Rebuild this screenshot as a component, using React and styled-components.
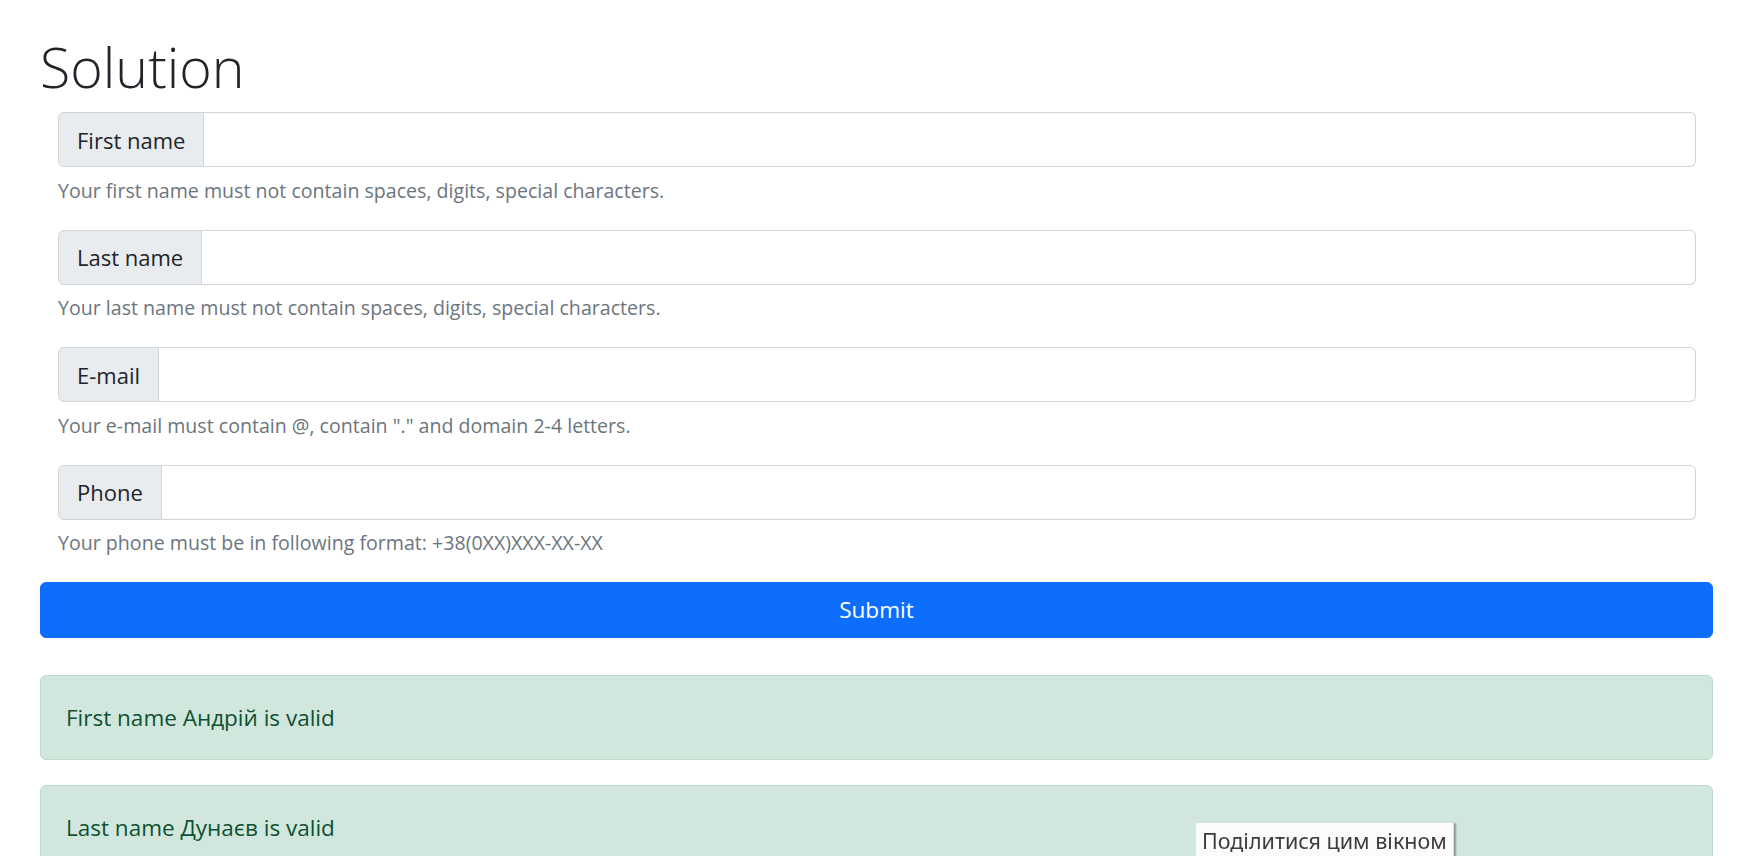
import styled, { createGlobalStyle } from 'styled-components';

const GlobalStyle = createGlobalStyle`
  html {
    overflow: hidden;
  }
  body {
    margin: 0;
    background: #fff;
    color: #212529;
    font-family: "Open Sans", "Noto Sans", sans-serif;
  }
`;

const Page = styled.div`
  padding: 34px 37px 0 40px;
`;

const Title = styled.h1`
  margin: 0 0 11.5px;
  font-size: 55.5px;
  font-weight: 300;
  line-height: 1.2;
  color: #212529;
`;

const Form = styled.form`
  display: flex;
  flex-direction: column;
`;

const Fields = styled.div`
  padding: 0 17px 0 18px;
`;

const Field = styled.div`
  margin-bottom: 25px;
`;

const InputGroup = styled.div`
  display: flex;
  height: 55px;
`;

const Addon = styled.label`
  display: flex;
  align-items: center;
  box-sizing: border-box;
  padding: 0 18px;
  background: #e9ecef;
  border: 1px solid #ced4da;
  border-radius: 6px 0 0 6px;
  font-size: 22px;
  color: #212529;
  white-space: nowrap;
`;

const Input = styled.input`
  flex: 1;
  min-width: 0;
  box-sizing: border-box;
  height: 100%;
  margin: 0;
  padding: 0 18px;
  border: 1px solid #ced4da;
  border-left: 0;
  border-radius: 0 6px 6px 0;
  background: #fff;
  font: inherit;
  font-size: 22px;
  outline: none;
`;

const Help = styled.div`
  margin-top: 9.5px;
  font-size: 19.6px;
  line-height: 28px;
  color: #6c757d;
`;

const SubmitButton = styled.button`
  display: block;
  width: 100%;
  height: 55.5px;
  padding: 0;
  border: 1px solid #0d6efd;
  border-radius: 6px;
  background: #0d6efd;
  color: #fff;
  font-family: inherit;
  font-size: 22.6px;
  cursor: pointer;
`;

const Alerts = styled.div`
  display: flex;
  flex-direction: column;
  gap: 25.5px;
  margin-top: 37px;
`;

const Alert = styled.div`
  box-sizing: border-box;
  height: 85px;
  display: flex;
  align-items: center;
  padding: 0 25px;
  border: 1px solid #badbcc;
  border-radius: 6px;
  background: #d1e7dd;
  color: #0f5132;
  font-size: 22.5px;
`;

const Tooltip = styled.div`
  position: fixed;
  left: 1195px;
  top: 822px;
  padding: 4px 6px 6px;
  background: #fbfbfb;
  border: 1px solid #e2e2e2;
  border-radius: 2px;
  box-shadow: 2px 1px 2px rgba(0, 0, 0, 0.35);
  color: #3c3c3c;
  font-family: "Noto Sans", "Open Sans", sans-serif;
  font-size: 21.5px;
  line-height: 27px;
  white-space: nowrap;
`;

const fields = [
  { id: 'first', label: 'First name', help: 'Your first name must not contain spaces, digits, special characters.' },
  { id: 'last', label: 'Last name', help: 'Your last name must not contain spaces, digits, special characters.' },
  { id: 'email', label: 'E-mail', help: 'Your e-mail must contain @, contain "." and domain 2-4 letters.' },
  { id: 'phone', label: 'Phone', help: 'Your phone must be in following format: +38(0XX)XXX-XX-XX' },
];

const results = [
  'First name Андрій is valid',
  'Last name Дунаєв is valid',
];

export default function App() {
  return (
    <Page>
      <GlobalStyle />
      <Title>Solution</Title>
      <Form onSubmit={(e) => e.preventDefault()}>
        <Fields>
          {fields.map((f) => (
            <Field key={f.id}>
              <InputGroup>
                <Addon htmlFor={f.id}>{f.label}</Addon>
                <Input id={f.id} type="text" />
              </InputGroup>
              <Help>{f.help}</Help>
            </Field>
          ))}
        </Fields>
        <SubmitButton type="submit">Submit</SubmitButton>
      </Form>
      <Alerts>
        {results.map((r) => (
          <Alert key={r}>{r}</Alert>
        ))}
      </Alerts>
      <Tooltip>Поділитися цим вікном</Tooltip>
    </Page>
  );
}
